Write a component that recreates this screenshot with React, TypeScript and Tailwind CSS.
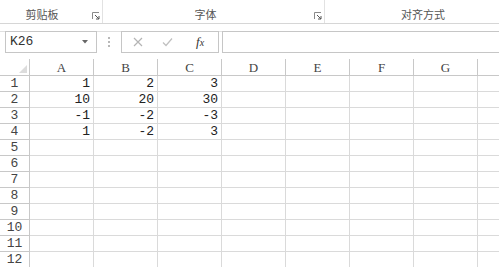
import React from "react";

const cols = ["A", "B", "C", "D", "E", "F", "G", "H"];
const data: (string | null)[][] = [
  ["1", "2", "3"],
  ["10", "20", "30"],
  ["-1", "-2", "-3"],
  ["1", "-2", "3"],
];

const Launcher: React.FC = () => (
  <svg width="8" height="8" viewBox="0 0 8 8" className="block">
    <path d="M0.5 7V0.5H7" fill="none" stroke="#8a8a8a" strokeWidth="1" />
    <path d="M3 3L7 7M7 4V7H4" fill="none" stroke="#555" strokeWidth="1" />
  </svg>
);

export default function App() {
  const rows = Array.from({ length: 12 }, (_, i) => i + 1);
  return (
    <div className="w-[499px] h-[267px] overflow-hidden bg-white font-['Liberation_Mono',monospace] text-[12px]">
      {/* ribbon group labels */}
      <div className="flex h-[24px] border-b border-[#d6d6d6] font-['Noto_Sans_CJK_SC',sans-serif] text-[11px] text-[#555]">
        <div className="w-[103px] border-r border-[#e2e2e2] flex items-center relative">
          <span className="w-full text-center pr-[18px] pt-[5px]">剪贴板</span>
          <div className="absolute left-[92px] top-[12px]">
            <Launcher />
          </div>
        </div>
        <div className="w-[222px] border-r border-[#e2e2e2] flex items-center relative">
          <span className="w-full text-center pr-[16px] pt-[5px]">字体</span>
          <div className="absolute left-[211px] top-[12px]">
            <Launcher />
          </div>
        </div>
        <div className="flex-1 flex items-center">
          <span className="w-full text-center pt-[5px] pl-[22px]">对齐方式</span>
        </div>
      </div>

      {/* formula bar */}
      <div className="h-[8px] border-b border-[#e0e0e0]" />
      <div className="flex items-center h-[21px] mt-[-1px]">
        <div className="ml-[5px] w-[92px] h-[22px] border border-[#c6c6c6] flex items-center justify-between pl-[4px] pr-[8px] text-[#333] text-[13px]">
          <span>K26</span>
          <svg width="6" height="4" viewBox="0 0 6 4">
            <path d="M0 0H6L3 3.5Z" fill="#666" />
          </svg>
        </div>
        <div className="w-[24px] flex flex-col items-center gap-[2px]">
          <span className="w-[2px] h-[2px] bg-[#b8b8b8]" />
          <span className="w-[2px] h-[2px] bg-[#b8b8b8]" />
          <span className="w-[2px] h-[2px] bg-[#b8b8b8]" />
        </div>
        <div className="w-[98px] h-[22px] border border-[#c6c6c6] flex items-center">
          <svg width="10" height="10" viewBox="0 0 10 10" className="ml-[11px]">
            <path d="M1 1L9 9M9 1L1 9" stroke="#b4b4b4" strokeWidth="1.2" />
          </svg>
          <svg width="11" height="10" viewBox="0 0 11 10" className="ml-[19px]">
            <path d="M1 5.5L4 8.5L10 1.5" fill="none" stroke="#c0c0c0" strokeWidth="1.2" />
          </svg>
          <span className="ml-[23px] font-['Liberation_Serif',serif] italic text-[13px] text-[#333] leading-none">
            f<span className="text-[10px]">x</span>
          </span>
        </div>
        <div className="ml-[3px] flex-1 h-[22px] border-y border-l border-[#c6c6c6]" />
      </div>

      {/* grid */}
      <div className="mt-[7px] grid grid-cols-[30px_repeat(8,64px)] text-[#222]">
        <div className="h-[17px] border-r border-b border-[#c8c8c8] relative">
          <svg width="8" height="8" viewBox="0 0 8 8" className="absolute left-[19px] top-[6px]">
            <path d="M8 0V8H0Z" fill="#dcdcdc" />
          </svg>
        </div>
        {cols.map((c) => (
          <div
            key={c}
            className="h-[17px] pt-[2px] border-r border-b border-[#c8c8c8] flex items-center justify-center text-[#444] font-['Liberation_Serif',serif] text-[13px]"
          >
            {c === "H" ? "" : c}
          </div>
        ))}
        {rows.map((r) => (
          <React.Fragment key={r}>
            <div className="h-[16px] border-r border-b border-[#c8c8c8] flex items-center justify-center text-[#444] text-[13px] leading-none">
              {r}
            </div>
            {cols.map((c, ci) => {
              const v = data[r - 1]?.[ci] ?? null;
              return (
                <div
                  key={c}
                  className="h-[16px] border-r border-b border-[#dadada] flex items-center justify-end pr-[3px] text-[13px] leading-none"
                >
                  {v}
                </div>
              );
            })}
          </React.Fragment>
        ))}
      </div>
    </div>
  );
}
